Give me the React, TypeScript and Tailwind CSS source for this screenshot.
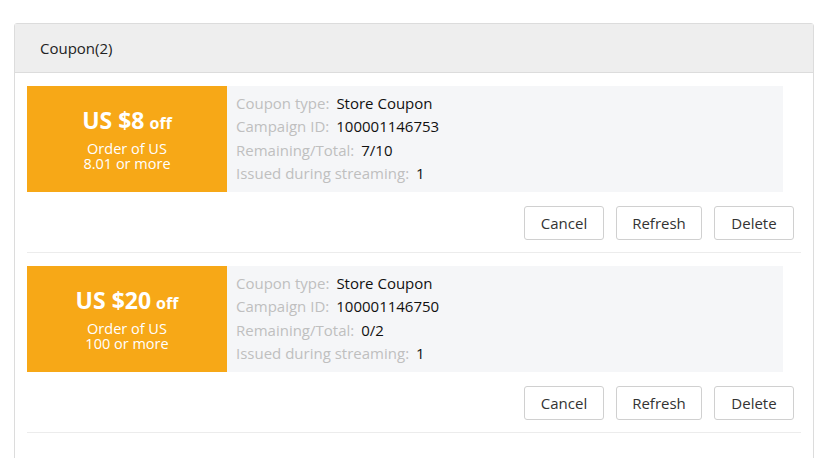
const font = { fontFamily: '"Open Sans", "Noto Sans", "Liberation Sans", sans-serif' };

type Coupon = {
  amount: string;
  min: string;
  id: string;
  remaining: string;
  issued: string;
};

const coupons: Coupon[] = [
  { amount: "US $8", min: "8.01 or more", id: "100001146753", remaining: "7/10", issued: "1" },
  { amount: "US $20", min: "100 or more", id: "100001146750", remaining: "0/2", issued: "1" },
];

const buttons = [
  { label: "Cancel", w: "w-[80px]" },
  { label: "Refresh", w: "w-[86px]" },
  { label: "Delete", w: "w-[80px]" },
];

function Row({ label, value }: { label: string; value: string }) {
  return (
    <div className="flex h-[23.5px] items-center text-[15px]">
      <span className="mr-[7px] text-[#bfbfbf]">{label}:</span>
      <span className="text-[#111]">{value}</span>
    </div>
  );
}

function CouponItem({ c }: { c: Coupon }) {
  return (
    <div className="border-b border-[#ececec] pt-[13px] pb-[12px]">
      <div className="flex h-[106px] w-[756px]">
        <div className="flex w-[200px] flex-col items-center justify-center bg-[#f7a817] pt-[2px] text-white">
          <div className="flex items-baseline font-bold leading-none">
            <span className="text-[23px]">{c.amount}</span>
            <span className="ml-[5px] text-[16px]">off</span>
          </div>
          <div className="mt-[9px] text-center text-[14.5px] leading-[15.5px]">
            <div>Order of US</div>
            <div>{c.min}</div>
          </div>
        </div>
        <div className="flex-1 bg-[#f5f6f8] px-[9px] pt-[5px]">
          <Row label="Coupon type" value="Store Coupon" />
          <Row label="Campaign ID" value={c.id} />
          <Row label="Remaining/Total" value={c.remaining} />
          <Row label="Issued during streaming" value={c.issued} />
        </div>
      </div>
      <div className="mt-[14px] mr-[7px] flex justify-end gap-[12px]">
        {buttons.map((b) => (
          <button
            key={b.label}
            type="button"
            className={`h-[34px] ${b.w} rounded-[3px] border border-[#d0d0d0] bg-white text-[15px] text-[#333]`}
            style={font}
          >
            {b.label}
          </button>
        ))}
      </div>
    </div>
  );
}

export default function App() {
  return (
    <div className="h-[458px] w-[814px] overflow-hidden bg-white pt-[23px] pl-[14px]" style={font}>
      <div className="h-[460px] w-[800px] rounded-t-[3px] border border-[#dcdcdc]">
        <div className="flex h-[49px] items-center border-b border-[#dcdcdc] bg-[#eeeeee] pl-[25px] text-[15px] text-[#222]">
          Coupon(2)
        </div>
        <div className="px-[12px]">
          {coupons.map((c) => (
            <CouponItem key={c.id} c={c} />
          ))}
        </div>
      </div>
    </div>
  );
}
